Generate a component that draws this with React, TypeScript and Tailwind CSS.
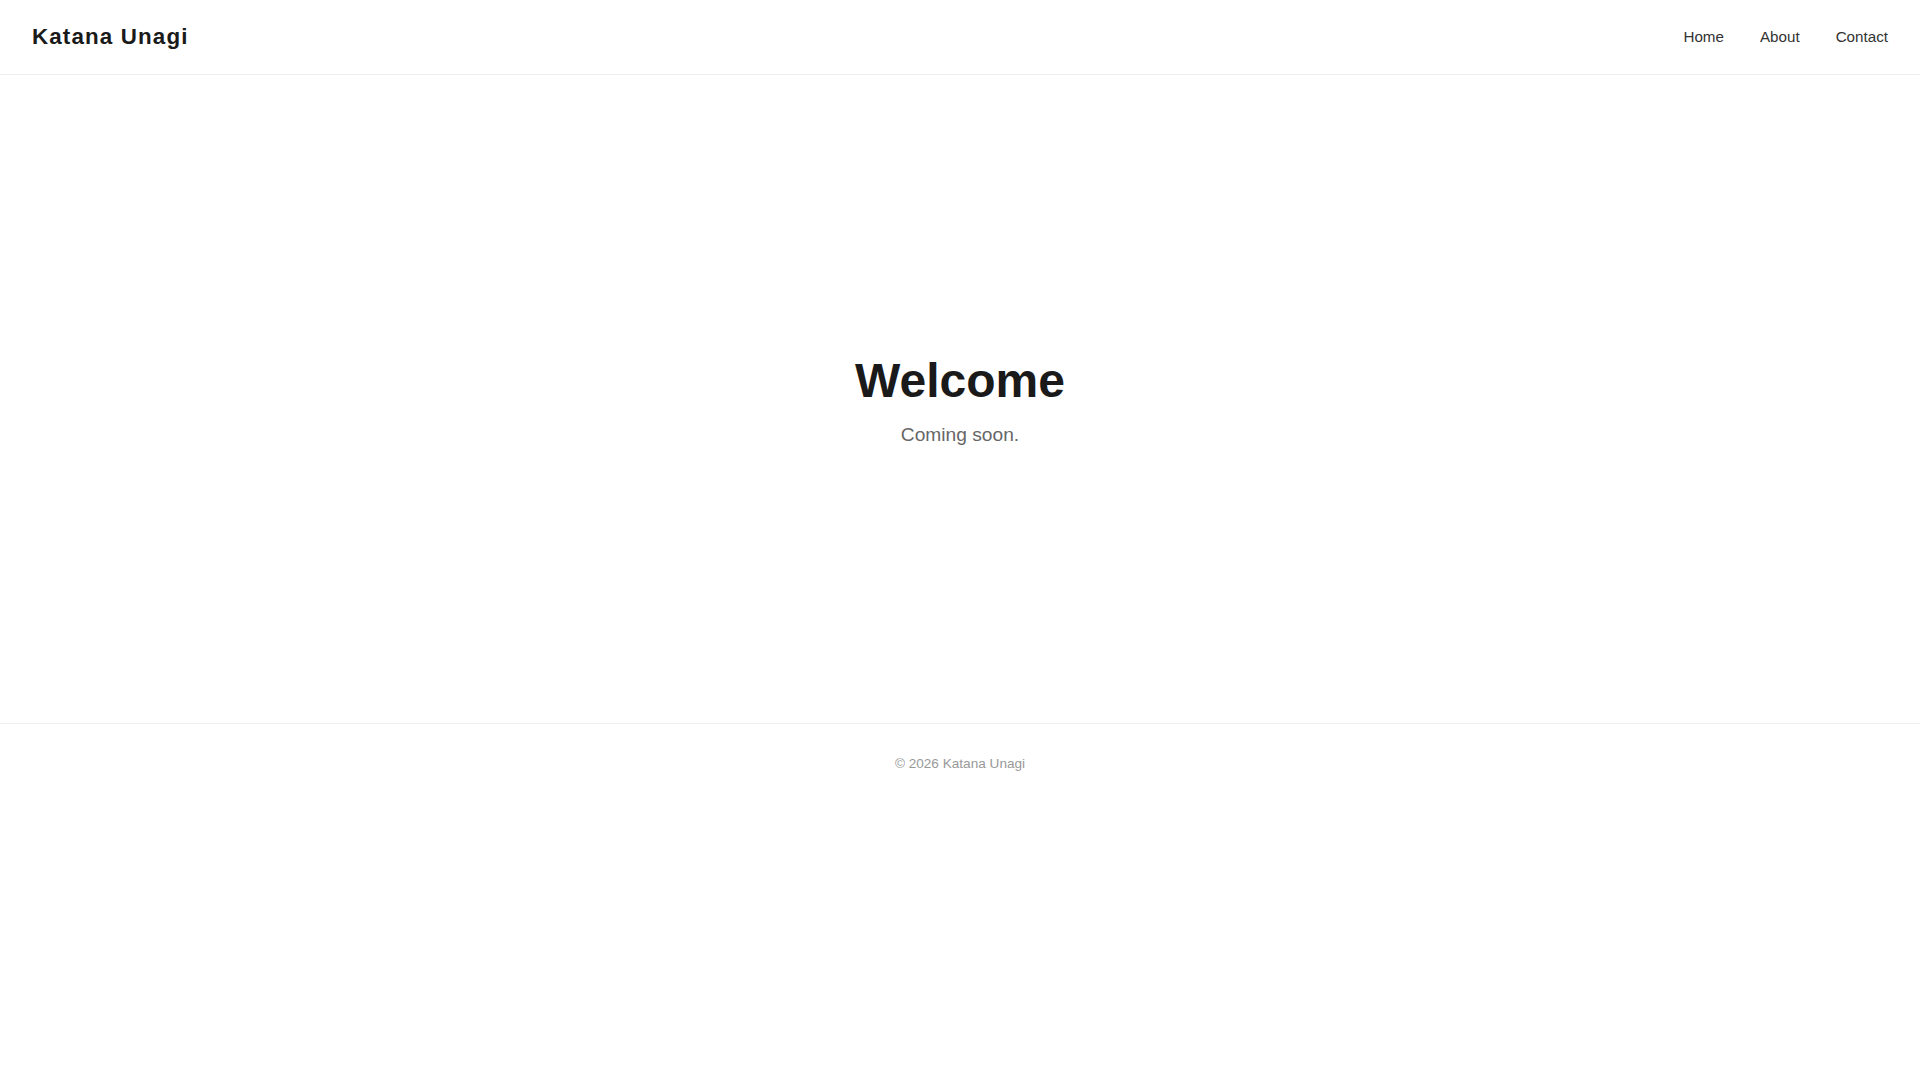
import React from 'react';

const navLinks = ['Home', 'About', 'Contact'];

export default function App() {
  return (
    <div className="min-h-screen bg-white font-['Liberation_Sans',Arial,sans-serif] text-[#333]">
      {/* Header */}
      <header className="h-[75px] px-8 flex items-center justify-between border-b border-[#eee]">
        <a href="#" className="text-[22.4px] font-bold tracking-[0.05em] text-[#1a1a1a]">
          Katana Unagi
        </a>
        <nav className="flex items-center gap-9">
          {navLinks.map(link => (
            <a key={link} href="#" className="text-[15.2px] text-[#333]">
              {link}
            </a>
          ))}
        </nav>
      </header>

      {/* Main */}
      <main className="min-h-[648px] pt-[4px] flex flex-col items-center justify-center text-center">
        <h1 className="text-[48px] leading-[1.2] font-bold text-[#1a1a1a]">Welcome</h1>
        <p className="mt-[11px] text-[19.2px] leading-[1.5] text-[#666]">Coming soon.</p>
      </main>

      {/* Footer */}
      <footer className="border-t border-[#eee] py-8 text-center">
        <p className="text-[13.6px] leading-[1.15] text-[#999]">© 2026 Katana Unagi</p>
      </footer>
    </div>
  );
}
